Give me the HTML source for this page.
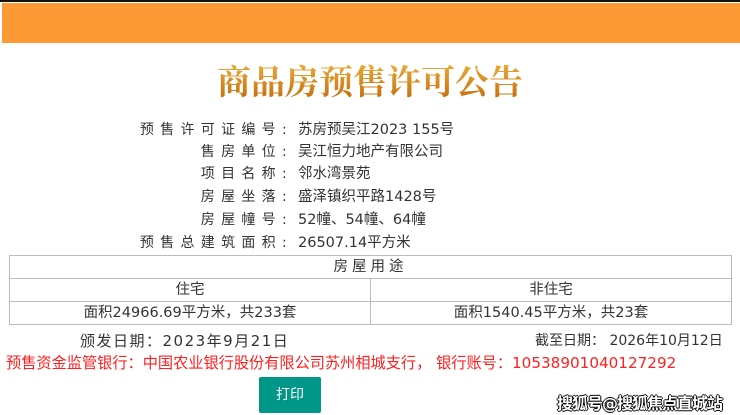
<!DOCTYPE html>
<html><head><meta charset="utf-8"><style>
*{margin:0;padding:0;box-sizing:border-box}
body{width:740px;height:415px;background:#fff;position:relative;overflow:hidden;font-family:"DejaVu Sans","Noto Sans CJK SC",sans-serif;color:#333}
.top{position:absolute;left:0;top:0;width:740px;height:2px;background:#111}
.bar{position:absolute;left:2px;top:3px;width:738px;height:40px;background:#fd9a35}
.title{position:absolute;left:0;width:740px;top:57px;text-align:center;font-family:"Noto Serif CJK SC",serif;font-size:34px;font-weight:bold;letter-spacing:0px;background:linear-gradient(#f2b640,#c0690a);-webkit-background-clip:text;background-clip:text;-webkit-text-fill-color:transparent;line-height:46px}
.row{position:absolute;left:0;width:740px;font-size:14px;line-height:20px;height:20px}
.row .l{position:absolute;right:447px;text-align:right;letter-spacing:6.3px;white-space:nowrap}
.row .v{position:absolute;left:298px;white-space:nowrap;font-size:14.5px}
table{position:absolute;left:9px;top:255px;width:723px;border-collapse:collapse;font-size:14.5px}
td{border:1px solid #bbb;text-align:center;height:23px;line-height:20px;padding:0}
.d{position:absolute;top:330px;font-size:14.5px}
.red{position:absolute;left:6px;top:351px;font-size:15.2px;color:#ff2020}
.btn{position:absolute;left:259px;top:377px;width:62px;height:36px;background:#009688;color:#fff;font-size:14px;text-align:center;line-height:36px;border-radius:2px}
.wm{position:absolute;left:557px;top:390px;font-size:16px;font-weight:bold;color:#fff;text-shadow:-1px 0 #000,1px 0 #000,0 1px #000,0 -1px #000;letter-spacing:-1px}
</style></head><body>
<div class="top"></div><div class="bar"></div>
<div class="title">商品房预售许可公告</div>
<div class="row" style="top:120px"><span class="l">预售许可证编号:</span><span class="v">苏房预吴江2023 155号</span></div>
<div class="row" style="top:142px"><span class="l">售房单位:</span><span class="v">吴江恒力地产有限公司</span></div>
<div class="row" style="top:164px"><span class="l">项目名称:</span><span class="v">邻水湾景苑</span></div>
<div class="row" style="top:187px"><span class="l">房屋坐落:</span><span class="v">盛泽镇织平路1428号</span></div>
<div class="row" style="top:210px"><span class="l">房屋幢号:</span><span class="v">52幢、54幢、64幢</span></div>
<div class="row" style="top:233px"><span class="l">预售总建筑面积:</span><span class="v">26507.14平方米</span></div>
<table>
<tr><td colspan="2" style="letter-spacing:4px">房屋用途</td></tr>
<tr><td style="width:50%">住宅</td><td>非住宅</td></tr>
<tr><td>面积24966.69平方米，共233套</td><td>面积1540.45平方米，共23套</td></tr>
</table>
<div class="d" style="left:80px;font-size:15px;letter-spacing:1.5px">颁发日期：2023年9月21日</div>
<div class="d" style="left:535px;font-size:14px">截至日期： 2026年10月12日</div>
<div class="red">预售资金监管银行：中国农业银行股份有限公司苏州相城支行， 银行账号：10538901040127292</div>
<div class="btn">打印</div>
<div class="wm">搜狐号@搜狐焦点直城站</div>
</body></html>
